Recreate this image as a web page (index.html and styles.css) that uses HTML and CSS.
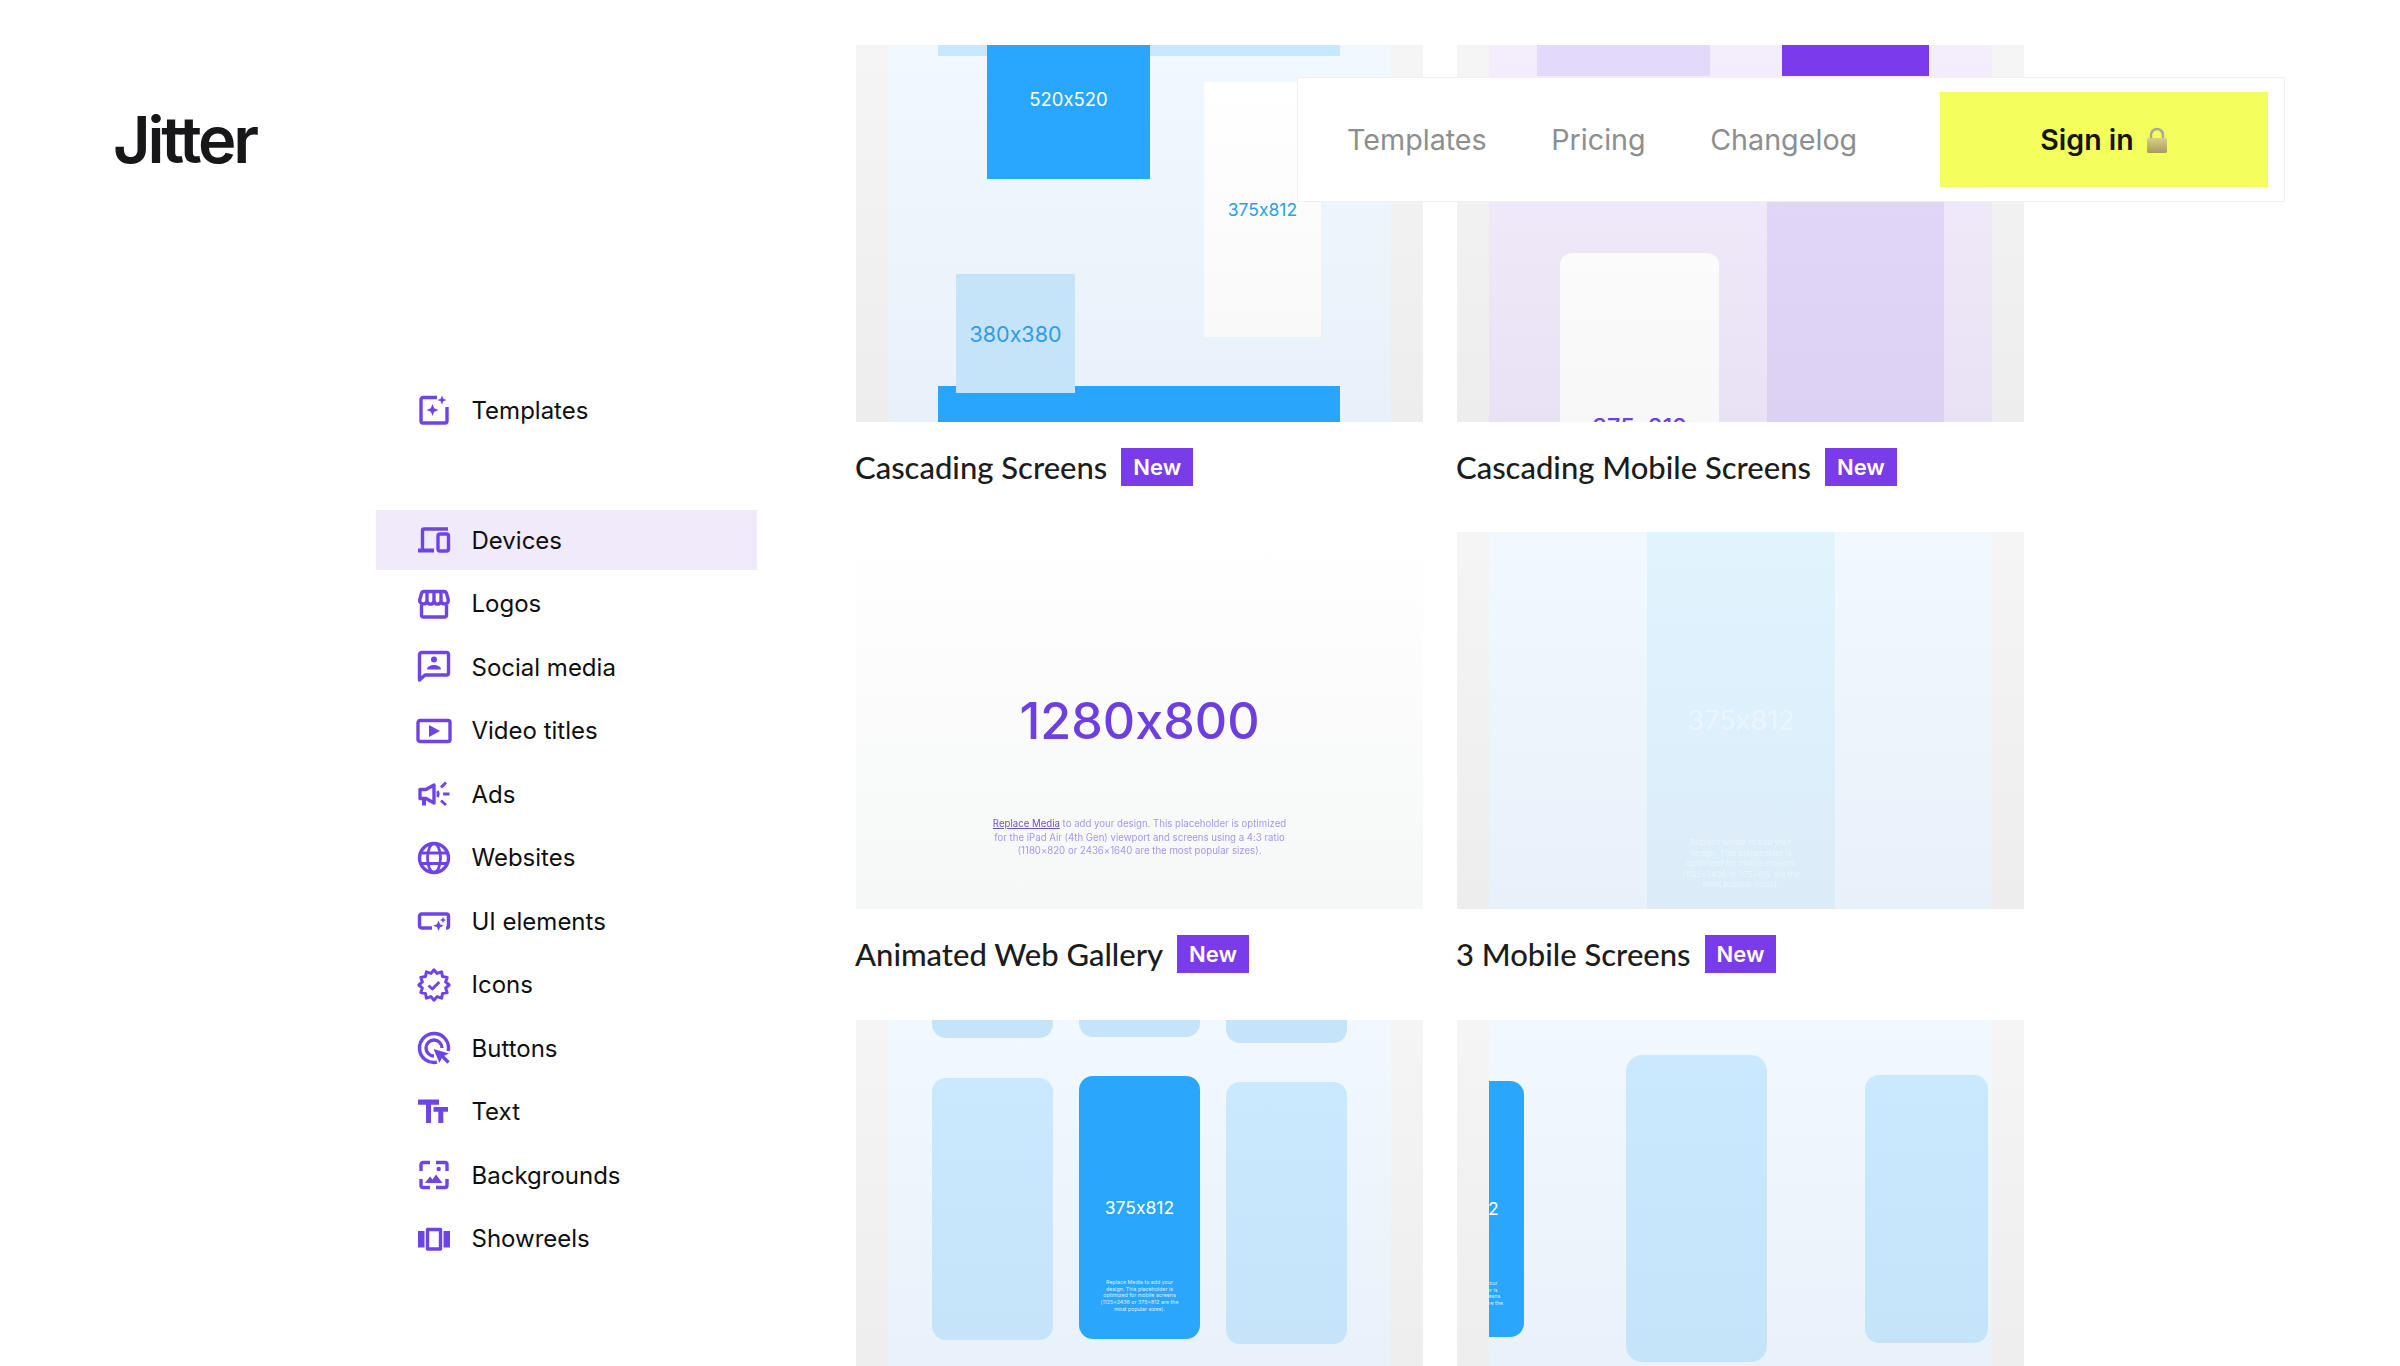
FILE: index.html
```html
<!DOCTYPE html>
<html lang="en">
<head>
    <meta charset="UTF-8">
    <meta name="viewport" content="width=device-width, initial-scale=1.0">
    <title>Jitter - Templates</title>
    <link rel="stylesheet" href="styles.css">
</head>
<body>
    <nav class="topbar">
        <a class="topbar-link">Templates</a>
        <a class="topbar-link">Pricing</a>
        <a class="topbar-link">Changelog</a>
        <a class="signin">Sign in
            <svg class="lock" viewBox="0 0 22 26">
                <defs>
                    <linearGradient id="lockBody" x1="0" y1="0" x2="0" y2="1">
                        <stop offset="0" stop-color="#d8cf8c"/>
                        <stop offset="1" stop-color="#a99a5c"/>
                    </linearGradient>
                </defs>
                <path d="M5 12V8a6 6 0 0 1 12 0v4" fill="none" stroke="#a8a89c" stroke-width="2.6"/>
                <rect x="1" y="11" width="20" height="15" rx="1.5" fill="url(#lockBody)"/>
            </svg>
        </a>
    </nav>

    <div class="page">
        <header class="brand">
            <div class="logo">Jitter</div>
        </header>

        <aside class="sidebar">
            <a class="side-item side-item-first">
                <svg class="side-icon" viewBox="0 0 32 32">
                    <path class="line" d="M19 3.500H5a2 2 0 0 0-2 2V27a2 2 0 0 0 2 2h22a2 2 0 0 0 2-2V13"/>
                    <path class="solid" d="M14.500 10l1.700 4.300 4.300 1.700-4.300 1.700-1.700 4.300-1.700-4.300-4.300-1.700 4.300-1.700zM24 1.500l1.300 3.200 3.200 1.300-3.200 1.300-1.300 3.200-1.300-3.200-3.200-1.300 3.200-1.300z"/>
                </svg>
                Templates
            </a>
            <a class="side-item side-item-active">
                <svg class="side-icon" viewBox="0 0 32 32">
                    <path class="line" d="M30 5H6a1.500 1.500 0 0 0-1.500 1.500V26"/>
                    <rect class="solid" x="0" y="24.500" width="16" height="4"/>
                    <rect class="line" x="20" y="10" width="10.500" height="17" rx="2"/>
                </svg>
                Devices
            </a>
            <a class="side-item">
                <svg class="side-icon" viewBox="0 0 32 32">
                    <path class="line" d="M6 3.500h20c1.500 0 2.200.8 2.600 2.200l1.700 6.300c.6 4.500-6.300 5.400-7.300 1-1 4.200-6 4.200-7 0-1 4.200-6 4.200-7 0-1 4.400-7.900 3.500-7.300-1l1.700-6.300C3.800 4.300 4.500 3.500 6 3.500zM9 3.500v10M16 3.500v10M23 3.500v10M3.500 17v10a2 2 0 0 0 2 2h21a2 2 0 0 0 2-2V17"/>
                </svg>
                Logos
            </a>
            <a class="side-item">
                <svg class="side-icon" viewBox="0 0 32 32">
                    <path class="line" d="M3.500 1.500h25a2 2 0 0 1 2 2V22a2 2 0 0 1-2 2H7l-5.500 5V3.500a2 2 0 0 1 2-2z"/>
                    <circle class="solid" cx="16" cy="8.500" r="3"/>
                    <path class="solid" d="M9 18.500c0-3 3.500-4.500 7-4.500s7 1.500 7 4.500z"/>
                </svg>
                Social media
            </a>
            <a class="side-item">
                <svg class="side-icon" viewBox="0 0 32 32">
                    <rect class="line" x="0" y="5.500" width="32" height="21" rx="2"/>
                    <path class="solid" d="M11 10l11 6-11 6z"/>
                </svg>
                Video titles
            </a>
            <a class="side-item">
                <svg class="side-icon" viewBox="0 0 32 32">
                    <path class="line" d="M2 11.500h6l8-4.500v18l-8-4.500H2z"/>
                    <path class="solid" d="M4 21h4v6.500H4z"/>
                    <path class="line line-thin" d="M19.500 13c1 2 1 4 0 6"/>
                    <path class="line line-thin" d="M23 9.500l5-5M25 16h6.500M23 22.500l5 4.500"/>
                </svg>
                Ads
            </a>
            <a class="side-item">
                <svg class="side-icon" viewBox="0 0 32 32">
                    <circle class="line" cx="16" cy="16" r="14.500"/>
                    <ellipse class="line line-thin" cx="16" cy="16" rx="6.500" ry="14.500"/>
                    <path class="line line-thin" d="M2.500 11h27M2.500 21.500h27"/>
                </svg>
                Websites
            </a>
            <a class="side-item">
                <svg class="side-icon" viewBox="0 0 32 32">
                    <path class="line" d="M14 23H3.500a2 2 0 0 1-2-2V11a2 2 0 0 1 2-2h25a2 2 0 0 1 2 2v10a2 2 0 0 1-2 2H28"/>
                    <path class="solid" d="M20.500 15.500l1.500 3.800 3.800 1.500-3.800 1.500-1.500 3.800-1.500-3.800-3.800-1.500 3.800-1.500zM25 12l.9 2.100 2.100.9-2.100.9-.9 2.100-.9-2.100-2.100-.9 2.100-.9z"/>
                </svg>
                UI elements
            </a>
            <a class="side-item">
                <svg class="side-icon" viewBox="0 0 32 32">
                    <polygon class="line line-badge" points="31.200,16 27.600,19.100 29.200,23.600 24.500,24.500 23.600,29.200 19.100,27.600 16,31.200 12.900,27.600 8.400,29.200 7.500,24.500 2.800,23.600 4.400,19.100 .8,16 4.400,12.900 2.800,8.400 7.500,7.500 8.400,2.800 12.900,4.400 16,.8 19.100,4.400 23.600,2.800 24.500,7.500 29.200,8.400 27.600,12.900"/>
                    <path class="line line-thin" d="M10.500 16.500l3.800 3.500 7-7"/>
                </svg>
                Icons
            </a>
            <a class="side-item">
                <svg class="side-icon" viewBox="0 0 32 32">
                    <path class="line" d="M30.200 19A14.500 14.500 0 1 0 19 30.200"/>
                    <path class="line" d="M24 16a8 8 0 1 0-8 8"/>
                    <path class="solid" d="M15.500 17L31 21.500l-6.500 3-3 6.500z"/>
                    <path class="line" d="M23 23l7.500 7.500"/>
                </svg>
                Buttons
            </a>
            <a class="side-item">
                <svg class="side-icon" viewBox="0 0 32 32">
                    <path class="solid" d="M0 3.500h21v5.300h-8V27H8V8.800H0zM15.500 11H30v4.700h-4.700V27h-5V15.700h-4.800z"/>
                </svg>
                Text
            </a>
            <a class="side-item">
                <svg class="side-icon" viewBox="0 0 32 32">
                    <path class="line" d="M12 3.500H5a2 2 0 0 0-2 2V12M18 3.500h9a2 2 0 0 1 2 2V12M3 20v6.500a2 2 0 0 0 2 2h7M18 28.500h9a2 2 0 0 0 2-2V20"/>
                    <circle class="solid" cx="20.700" cy="10" r="2.200"/>
                    <path class="solid" d="M7 24l5-6.500 2.500 3 3.500-5 6.500 8.500z"/>
                </svg>
                Backgrounds
            </a>
            <a class="side-item">
                <svg class="side-icon" viewBox="0 0 32 32">
                    <rect class="solid" x="0" y="8" width="6.500" height="16.500"/>
                    <rect class="line" x="9.500" y="6.500" width="13" height="19.500"/>
                    <rect class="solid" x="25.500" y="8" width="6.500" height="16.500"/>
                </svg>
                Showreels
            </a>
        </aside>

        <main class="gallery">
            <article class="card">
                <div class="thumb">
                    <div class="stage">
                        <div class="box bar-light bar-top"></div>
                        <div class="box box-blue s520">520x520</div>
                        <div class="box s375">375x812</div>
                        <div class="box bar-blue"></div>
                        <div class="box s380">380x380</div>
                    </div>
                </div>
                <div class="caption"><span class="name">Cascading Screens</span><span class="tag">New</span></div>
            </article>

            <article class="card">
                <div class="thumb">
                    <div class="stage stage-lilac">
                        <div class="box lilac-top"></div>
                        <div class="box purple-top"></div>
                        <div class="box lilac-panel"></div>
                        <div class="box mobile-white"><span class="mobile-label">375x812</span></div>
                    </div>
                </div>
                <div class="caption"><span class="name">Cascading Mobile Screens</span><span class="tag">New</span></div>
            </article>

            <article class="card">
                <div class="thumb thumb-plain">
                    <div class="web-size">1280x800</div>
                    <p class="web-note"><u>Replace Media</u> to add your design. This placeholder is optimized<br>for the iPad Air (4th Gen) viewport and screens using a 4:3 ratio<br>(1180×820 or 2436×1640 are the most popular sizes).</p>
                </div>
                <div class="caption"><span class="name">Animated Web Gallery</span><span class="tag">New</span></div>
            </article>

            <article class="card">
                <div class="thumb">
                    <div class="stage">
                        <div class="box pale-col">
                            <div class="pale-size">375x812</div>
                            <p class="pale-note">Replace Media to add your<br>design. This placeholder is<br>optimized for mobile screens<br>(1125×2436 or 375×812 are the<br>most popular sizes).</p>
                        </div>
                    </div>
                </div>
                <div class="caption"><span class="name">3 Mobile Screens</span><span class="tag">New</span></div>
            </article>

            <article class="card">
                <div class="thumb">
                    <div class="stage">
                        <div class="box phone p-a"></div>
                        <div class="box phone p-b"></div>
                        <div class="box phone p-c"></div>
                        <div class="box phone p-d"></div>
                        <div class="box phone phone-blue p-e">
                            <div class="phone-size">375x812</div>
                            <p class="phone-note">Replace Media to add your<br>design. This placeholder is<br>optimized for mobile screens<br>(1125×2436 or 375×812 are the<br>most popular sizes).</p>
                        </div>
                        <div class="box phone p-f"></div>
                    </div>
                </div>
            </article>

            <article class="card">
                <div class="thumb">
                    <div class="stage">
                        <div class="box phone phone-blue p-g">
                            <div class="phone-size">375x812</div>
                            <p class="phone-note">Replace Media to add your<br>design. This placeholder is<br>optimized for mobile screens<br>(1125×2436 or 375×812 are the<br>most popular sizes).</p>
                        </div>
                        <div class="box phone p-h"></div>
                        <div class="box phone p-i"></div>
                    </div>
                </div>
            </article>
        </main>
    </div>
</body>
</html>
```

FILE: styles.css
```css
* {
    box-sizing: border-box;
}

body {
    margin: 0;
    height: 1366px;
    overflow: hidden;
    position: relative;
    background-color: #fff;
    color: #111;
    font-family: Inter, "Liberation Sans", sans-serif;
    font-feature-settings: "calt" 0;
}

.page {
    display: flex;
    height: 1366px;
    overflow: hidden;
}

/* top right floating bar */
.topbar {
    position: absolute;
    top: 77px;
    right: 115px;
    z-index: 5;
    width: 988px;
    height: 125px;
    display: flex;
    align-items: center;
    padding: 0 16px 0 49px;
    background-color: #fff;
    border: 1px solid #f0f0f0;
}

.topbar-link {
    margin-right: 64.5px;
    font-size: 28.7px;
    color: #8e8e8e;
}

.signin {
    display: flex;
    align-items: center;
    justify-content: center;
    gap: 12px;
    width: 328px;
    height: 95px;
    margin-left: auto;
    background-color: #f4ff5e;
    font-size: 28.5px;
    font-weight: 600;
    color: #141414;
}

.lock {
    width: 22px;
    height: 26px;
}

/* logo column */
.brand {
    flex: 0 0 376px;
    padding: 103px 0 0 113px;
}

.logo {
    font-size: 65px;
    line-height: 1.15;
    font-weight: 600;
    letter-spacing: -3.2px;
    color: #17171a;
}

/* side menu */
.sidebar {
    flex: 0 0 381px;
    display: flex;
    flex-direction: column;
    gap: 3.5px;
    padding-top: 380px;
}

.side-item {
    display: flex;
    align-items: center;
    gap: 21.5px;
    height: 60px;
    flex: none;
    padding-left: 42px;
    font-size: 24px;
    color: #0f0f0f;
}

.side-item-first {
    margin-bottom: 66.5px;
}

.side-item-active {
    background-color: #f1eafb;
}

.side-icon {
    width: 32px;
    height: 32px;
    flex: none;
    overflow: visible;
}

.line {
    fill: none;
    stroke: #6e44e6;
    stroke-width: 3.4;
    stroke-linejoin: round;
}

.line-thin {
    stroke-width: 2.8;
}

.line-badge {
    stroke-width: 3;
}

.solid {
    fill: #6e44e6;
}

/* template grid */
.gallery {
    flex: none;
    margin-left: 99px;
    padding-top: 44.8px;
    display: grid;
    grid-template-columns: 567px 567px;
    column-gap: 34px;
    row-gap: 46.5px;
    align-content: start;
}

.thumb {
    position: relative;
    height: 377px;
    overflow: hidden;
    background: linear-gradient(#f5f5f5, #ededed);
}

.thumb-plain {
    background: linear-gradient(#fff, #f6f7f7);
    text-align: center;
}

.stage {
    position: absolute;
    top: 0;
    bottom: 0;
    left: 32px;
    width: 503px;
    overflow: hidden;
    background: linear-gradient(#f1f9ff, #e8f1f9);
}

.stage-lilac {
    background: linear-gradient(#f3edfc, #e8e2f4);
}

.box {
    position: absolute;
    display: flex;
    align-items: center;
    justify-content: center;
}

.bar-light,
.bar-blue {
    left: 50px;
    width: 402px;
}

.bar-top {
    top: 0;
    height: 11px;
    background-color: #c8e8ff;
}

.bar-blue {
    top: 341px;
    height: 36px;
    background-color: #29a6fb;
}

.box-blue {
    background-color: #29a6fd;
    color: #fff;
}

.s520 {
    left: 99px;
    top: 0;
    width: 163px;
    height: 134px;
    padding-bottom: 26px;
    font-size: 18.5px;
}

.s375 {
    left: 316px;
    top: 37px;
    width: 117px;
    height: 255px;
    background: linear-gradient(#fff, #f9f9f9);
    color: #2a9fe8;
    font-size: 17.5px;
    padding-top: 1px;
}

.s380 {
    left: 68px;
    top: 229px;
    width: 119px;
    height: 119px;
    padding-top: 1px;
    background-color: #c5e4f9;
    color: #2d9de8;
    font-size: 21.5px;
}

.lilac-top {
    left: 48px;
    top: 0;
    width: 173px;
    height: 31px;
    background-color: #e3d9fa;
}

.purple-top {
    left: 293px;
    top: 0;
    width: 147px;
    height: 31px;
    background-color: #7c3aed;
}

.lilac-panel {
    left: 278px;
    top: 150px;
    width: 177px;
    height: 227px;
    background: linear-gradient(#e1d6f6, #dcd1f2);
}

.mobile-white {
    left: 71px;
    top: 208px;
    width: 159px;
    height: 190px;
    overflow: hidden;
    align-items: flex-start;
    padding-top: 160px;
    border-radius: 12px;
    background: linear-gradient(#fbfbfb, #f7f7f7);
}

.mobile-label {
    color: #6d3fe0;
    font-size: 23.5px;
    line-height: 28px;
    font-weight: 500;
}

.web-size {
    padding-top: 157px;
    font-size: 50.2px;
    line-height: 64px;
    font-weight: 500;
    color: #6d3fe0;
}

.web-note {
    margin: 64px 0 0;
    font-size: 9.65px;
    line-height: 13.6px;
    color: #a698ea;
    filter: blur(0.5px);
}

.web-note u {
    color: #6d52c8;
}

.pale-col {
    left: 158px;
    top: 0;
    width: 188px;
    height: 377px;
    display: block;
    text-align: center;
    background: linear-gradient(#e1f4fe, #dbecf8);
}

.pale-size {
    padding-top: 172px;
    font-size: 27px;
    line-height: 34px;
    color: rgba(255, 255, 255, 0.4);
}

.pale-note {
    margin: 99px 0 0;
    font-size: 8px;
    line-height: 10.5px;
    color: rgba(255, 255, 255, 0.45);
    filter: blur(0.4px);
}

.phone {
    border-radius: 14px;
    background: linear-gradient(#cbe9fe, #c5e4f9);
}

.phone-blue {
    display: block;
    text-align: center;
    background: #2ba6fd;
    color: #fff;
}

.phone-size {
    padding-top: 120px;
    font-size: 17.5px;
    line-height: 24px;
}

.phone-note {
    margin: 59px 0 0;
    font-size: 5.3px;
    line-height: 6.8px;
    color: rgba(255, 255, 255, 0.85);
}

.p-g .phone-size {
    padding-top: 116px;
}

.p-a { left: 44px; top: -245px; width: 121px; height: 263px; }
.p-b { left: 191px; top: -246px; width: 121px; height: 263px; }
.p-c { left: 338px; top: -240px; width: 121px; height: 263px; }
.p-d { left: 44px; top: 58px; width: 121px; height: 262px; }
.p-e { left: 191px; top: 56px; width: 121px; height: 263px; }
.p-f { left: 338px; top: 62px; width: 121px; height: 262px; }
.p-g { left: -85px; top: 61px; width: 120px; height: 256px; }
.p-h { left: 137px; top: 35px; width: 141px; height: 307px; border-radius: 16px; }
.p-i { left: 376px; top: 55px; width: 123px; height: 268px; }

.caption {
    display: flex;
    align-items: center;
    gap: 14px;
    margin-top: 26px;
    margin-left: -1px;
    height: 38px;
}

.name {
    font-family: Lato, "Open Sans", sans-serif;
    font-size: 31px;
    font-weight: 500;
    color: #1c1c1c;
}

.tag {
    display: flex;
    align-items: center;
    height: 38px;
    padding: 0 12px;
    background-color: #7a3ce8;
    font-size: 22px;
    font-weight: 600;
    color: #fff;
}
```
